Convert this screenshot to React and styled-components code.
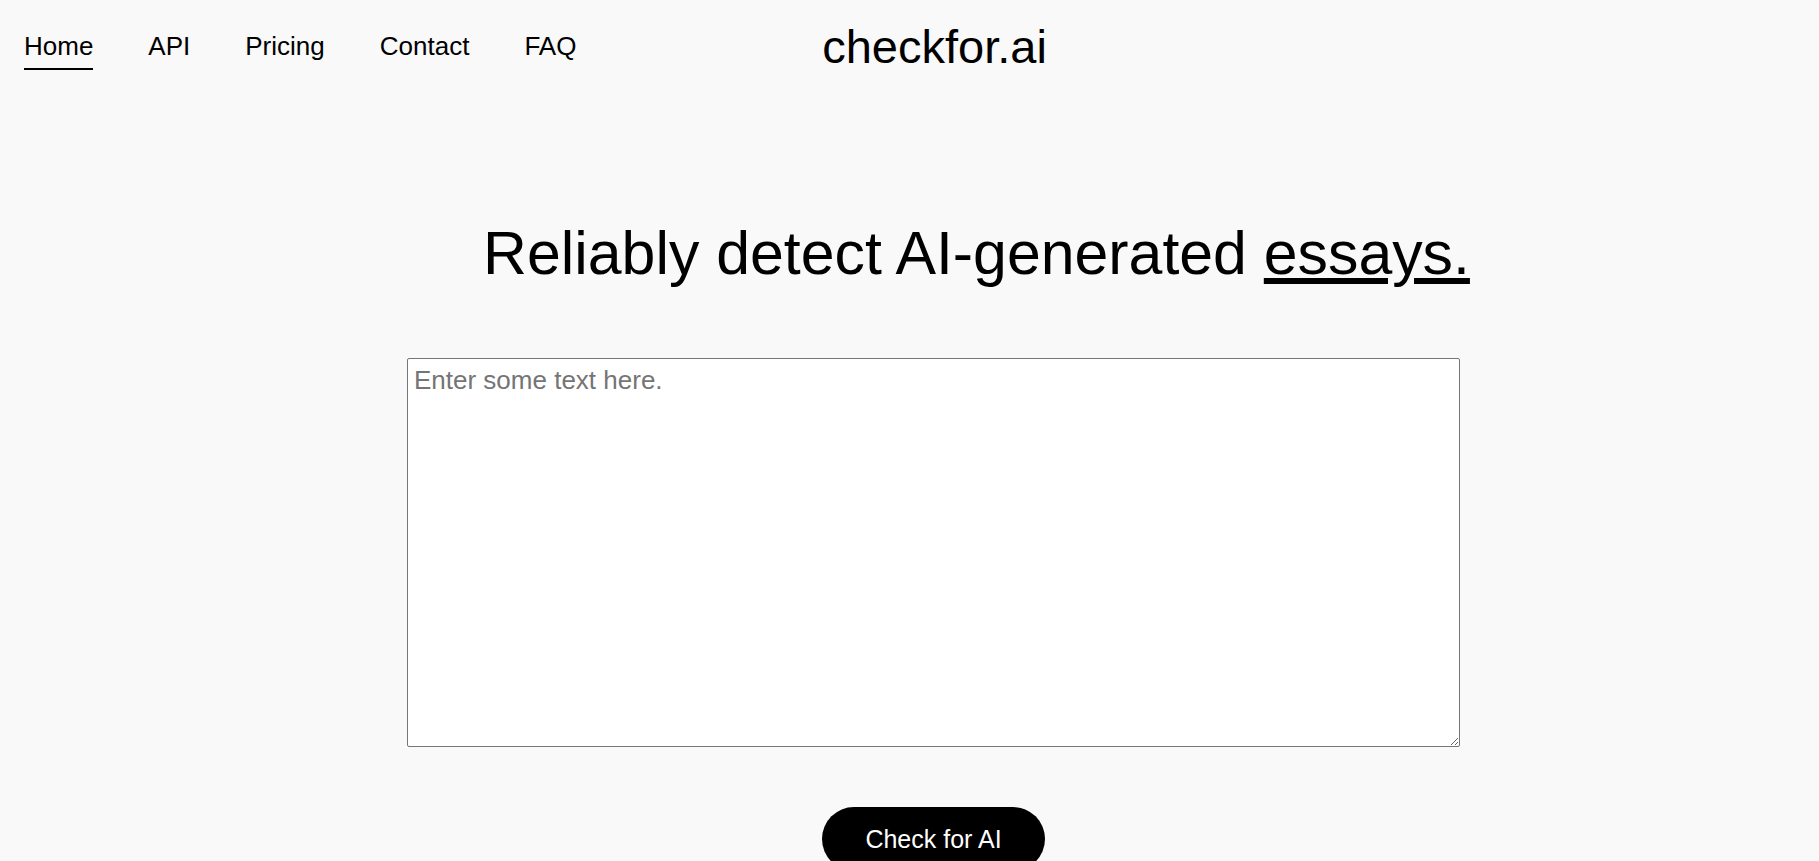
import React, { useState } from "react";
import styled, { createGlobalStyle } from "styled-components";

const GlobalStyle = createGlobalStyle`
  * {
    box-sizing: border-box;
  }

  body {
    margin: 0;
    background-color: #f9f9f9;
    color: #000;
    font-family: "Liberation Sans", Arial, sans-serif;
  }
`;

const links = ["Home", "API", "Pricing", "Contact", "FAQ"];

export default function App() {
  const [active, setActive] = useState("Home");
  const [text, setText] = useState("");

  return (
    <>
      <GlobalStyle />
      <Header>
        <Nav>
          {links.map((link) => (
            <NavLink
              key={link}
              href="#"
              $active={link === active}
              onClick={(e) => {
                e.preventDefault();
                setActive(link);
              }}
            >
              {link}
            </NavLink>
          ))}
        </Nav>
        <Logo>checkfor.ai</Logo>
        <div />
      </Header>
      <Main>
        <Headline>
          Reliably detect AI-generated <Word>essays.</Word>
        </Headline>
        <TextBox
          placeholder="Enter some text here."
          value={text}
          onChange={(e) => setText(e.target.value)}
        />
        <CheckButton type="button">Check for AI</CheckButton>
      </Main>
    </>
  );
}

const Header = styled.header`
  display: grid;
  grid-template-columns: 1fr auto 1fr;
  align-items: center;
  padding: 19px 22px 0 24px;
`;

const Nav = styled.nav`
  display: flex;
  align-items: center;
  gap: 55px;
`;

const NavLink = styled.a`
  padding: 8px 0 6px;
  border-bottom: 2px solid ${(p) => (p.$active ? "#000" : "transparent")};
  color: #000;
  font-size: 26px;
  line-height: normal;
  text-decoration: none;
  cursor: pointer;
`;

const Logo = styled.h1`
  margin: 0 0 0 48px;
  font-size: 47px;
  font-weight: 400;
  line-height: normal;
`;

const Main = styled.main`
  display: flex;
  flex-direction: column;
  align-items: center;
  padding-left: 48px;
`;

const Headline = styled.h2`
  margin: 144px 0 70px;
  padding-left: 86px;
  font-size: 60.8px;
  font-weight: 400;
  line-height: normal;
  text-align: center;
`;

const Word = styled.span`
  text-decoration: underline;
`;

const TextBox = styled.textarea`
  display: block;
  width: 1053px;
  height: 389px;
  padding: 6px;
  border: 1px solid #767676;
  border-radius: 2px;
  background-color: #fff;
  color: #000;
  font-family: "Liberation Sans", Arial, sans-serif;
  font-size: 26px;
  line-height: normal;

  &::placeholder {
    color: #757575;
  }
`;

const CheckButton = styled.button`
  margin-top: 60px;
  padding: 18px 43px;
  border: none;
  border-radius: 40px;
  background-color: #000;
  color: #fff;
  font-family: "Liberation Sans", Arial, sans-serif;
  font-size: 25px;
  line-height: 28px;
  cursor: pointer;
`;
